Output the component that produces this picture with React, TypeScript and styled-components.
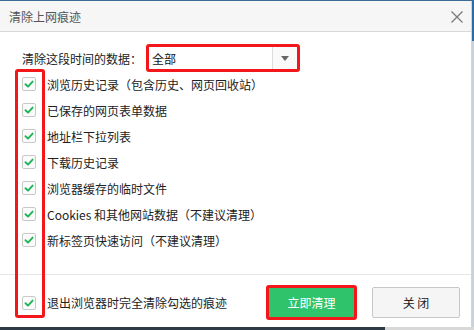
import styled, { createGlobalStyle } from 'styled-components';

const GlobalStyle = createGlobalStyle`
  html, body {
    margin: 0;
    padding: 0;
    background: #ffffff;
  }
  body {
    font-family: "Noto Sans CJK SC", "Microsoft YaHei", "Noto Sans", sans-serif;
    font-size: 12px;
    color: #222;
  }
`;

const ITEMS = [
    '浏览历史记录（包含历史、网页回收站）',
    '已保存的网页表单数据',
    '地址栏下拉列表',
    '下载历史记录',
    '浏览器缓存的临时文件',
    'Cookies 和其他网站数据（不建议清理）',
    '新标签页快速访问（不建议清理）',
];

const Check = () => (
    <CheckBox>
        <svg width="10" height="10" viewBox="0 0 10 10">
            <polyline points="1.5,5.2 4,7.6 8.6,2.6" fill="none" stroke="#1fb556" strokeWidth="1.9" strokeLinecap="round" strokeLinejoin="round" />
        </svg>
    </CheckBox>
);

const App = () => {
    return (
        <Screen>
            <GlobalStyle />
            <MainRow>
                <Dialog>
                    <TitleBar>
                        <Title>清除上网痕迹</Title>
                        <CloseIcon width="12" height="12" viewBox="0 0 12 12">
                            <path d="M0.5 0.5 L11.5 11.5 M11.5 0.5 L0.5 11.5" stroke="#7a7a7a" strokeWidth="1.3" />
                        </CloseIcon>
                    </TitleBar>
                    <Content>
                        <TimeRow>
                            <Label>清除这段时间的数据：</Label>
                            <Select>
                                <SelectValue>全部</SelectValue>
                                <SelectArrow>
                                    <svg width="8" height="5" viewBox="0 0 8 5">
                                        <polygon points="0,0 8,0 4,5" fill="#666" />
                                    </svg>
                                </SelectArrow>
                            </Select>
                        </TimeRow>
                        <List>
                            {ITEMS.map((text) => (
                                <Row key={text}>
                                    <Check />
                                    <RowText>{text}</RowText>
                                </Row>
                            ))}
                        </List>
                    </Content>
                    <Footer>
                        <Row>
                            <Check />
                            <RowText>退出浏览器时完全清除勾选的痕迹</RowText>
                        </Row>
                        <Buttons>
                            <PrimaryButton>立即清理</PrimaryButton>
                            <SecondaryButton>关 闭</SecondaryButton>
                        </Buttons>
                    </Footer>
                    <Highlight />
                </Dialog>
                <EdgeStrip />
            </MainRow>
            <BottomStrip />
        </Screen>
    );
};

export default App;

const Screen = styled.div`
    width: 474px;
    height: 330px;
    display: flex;
    flex-direction: column;
    border-top: 1px solid #3d6b96;
    box-sizing: border-box;
    overflow: hidden;
`;

const MainRow = styled.div`
    flex: 1;
    display: flex;
    min-height: 0;
`;

const Dialog = styled.div`
    position: relative;
    flex: 1;
    display: flex;
    flex-direction: column;
    background: #fff;
    border-right: 1px solid #d3d3d3;
`;

const EdgeStrip = styled.div`
    width: 2px;
    background: linear-gradient(to bottom, #2f6aa0 0, #2f6aa0 40px, #c9d2da 40px, #c9d2da 100%);
`;

const BottomStrip = styled.div`
    height: 3px;
    background: linear-gradient(to right, #2e3a45 0, #2e3a45 385px, #d8d8d8 385px);
`;

const TitleBar = styled.div`
    height: 30px;
    display: flex;
    align-items: center;
    justify-content: space-between;
    padding: 0 8px 0 9px;
    background: #f6f6f6;
    border-bottom: 1px solid #d8d8d8;
`;

const Title = styled.span`
    font-size: 12px;
    color: #555;
`;

const CloseIcon = styled.svg`
    display: block;
    margin-top: 1px;
`;

const Content = styled.div`
    padding: 12px 0 0 22px;
    display: flex;
    flex-direction: column;
`;

const TimeRow = styled.div`
    display: flex;
    align-items: center;
    height: 28px;
`;

const Label = styled.span`
    font-size: 12px;
    color: #222;
    width: 124px;
`;

const Select = styled.div`
    width: 154px;
    height: 28px;
    box-sizing: border-box;
    border: 3px solid #f3171c;
    border-radius: 3px;
    display: flex;
    align-items: stretch;
    background: #fff;
`;

const SelectValue = styled.span`
    flex: 1;
    display: flex;
    align-items: center;
    padding-left: 3px;
    font-size: 12px;
    color: #111;
`;

const SelectArrow = styled.span`
    width: 24px;
    display: flex;
    align-items: center;
    justify-content: center;
    border-left: 1px solid #dcdcdc;
    background: #fafafa;
`;

const List = styled.div`
    margin-top: -1px;
    display: flex;
    flex-direction: column;
`;

const Row = styled.div`
    height: 26px;
    display: flex;
    align-items: center;
    gap: 11px;
`;

const CheckBox = styled.span`
    width: 14px;
    height: 14px;
    box-sizing: border-box;
    border: 1px solid #c9c9c9;
    border-radius: 2px;
    background: #fbfbfb;
    display: flex;
    align-items: center;
    justify-content: center;
`;

const RowText = styled.span`
    font-size: 12px;
    color: #222;
    white-space: nowrap;
`;

const Footer = styled.div`
    margin-top: auto;
    border-top: 1px solid #e6e6e6;
    padding: 10px 11px 7px 22px;
    display: flex;
    align-items: center;
    justify-content: space-between;
`;

const Buttons = styled.div`
    display: flex;
    align-items: center;
    gap: 15px;
`;

const PrimaryButton = styled.button`
    width: 91px;
    height: 35px;
    box-sizing: border-box;
    border: 3px solid #f3171c;
    border-radius: 3px;
    background: #2fc46c;
    color: #fff;
    font-family: inherit;
    font-size: 12px;
    padding: 0;
`;

const SecondaryButton = styled.button`
    width: 88px;
    height: 31px;
    box-sizing: border-box;
    border: 1px solid #c8c8c8;
    border-radius: 2px;
    background: #f5f5f5;
    color: #222;
    font-family: inherit;
    font-size: 12px;
    padding: 0;
`;

const Highlight = styled.div`
    position: absolute;
    left: 15px;
    top: 68px;
    width: 30px;
    height: 249px;
    box-sizing: border-box;
    border: 3px solid #f3171c;
    border-radius: 3px;
    pointer-events: none;
`;
